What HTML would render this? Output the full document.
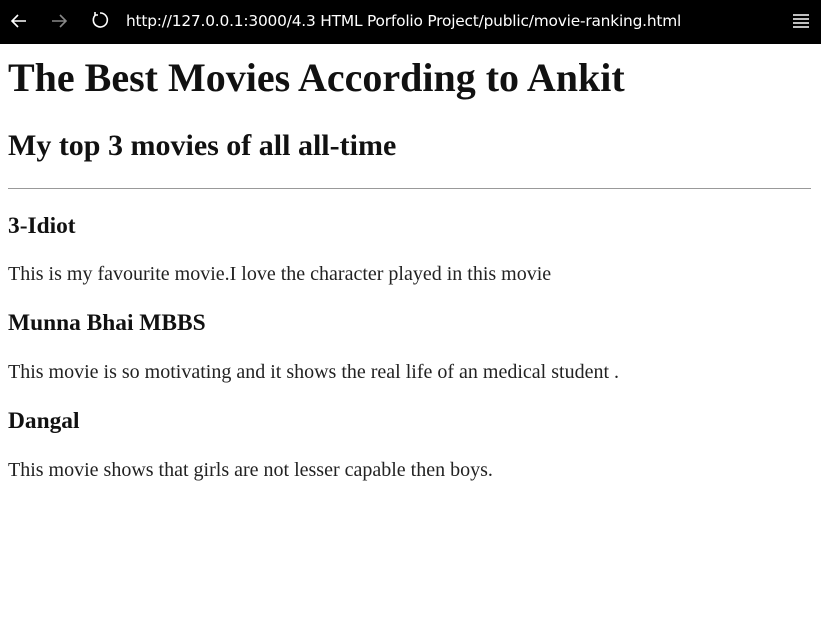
<!DOCTYPE html>
<html><head><meta charset="utf-8"><style>
html,body{margin:0;padding:0;background:#fff;}
.bar{height:44px;background:#000;color:#fff;position:relative;font-family:"DejaVu Sans","Liberation Sans",sans-serif;}
.bar svg{position:absolute;}
.url{position:absolute;left:126px;top:12px;font-size:15.4px;color:#fff;white-space:nowrap;letter-spacing:-0.2px;}
.page{margin:0 10px 0 8px;font-family:"Liberation Serif",serif;color:#111;line-height:1.15;}
h1{font-size:40px;margin:0;padding-top:11px;}
h2{font-size:30px;margin:28px 0 0;}
h3{font-size:23.4px;margin:24px 0 0;}
p{font-size:20px;margin:24px 0 0;color:#222;}
hr{border:0;border-top:1px solid #999;margin:24px 0 0;}
</style></head><body>
<div class="bar">
<svg style="left:9px;top:11px" width="20" height="20" viewBox="0 0 20 20"><path d="M17 10H3M9 4L3 10l6 6" stroke="#fff" stroke-width="1.6" fill="none"/></svg>
<svg style="left:49px;top:11px" width="20" height="20" viewBox="0 0 20 20"><path d="M3 10h14M11 4l6 6-6 6" stroke="#888" stroke-width="1.6" fill="none"/></svg>
<svg style="left:90px;top:10px" width="20" height="20" viewBox="0 0 20 20"><path d="M6 4.5A7 7 0 1 0 10 3M5 2v3h3" stroke="#fff" stroke-width="1.6" fill="none"/></svg>
<div class="url">http://127.0.0.1:3000/4.3 HTML Porfolio Project/public/movie-ranking.html</div>
<svg style="left:793px;top:13px" width="16" height="16" viewBox="0 0 16 16"><path d="M0 2h16M0 6h16M0 10h16M0 14h16" stroke="#fff" stroke-width="1.5"/></svg>
</div>
<div class="page">
<h1>The Best Movies According to Ankit</h1>
<h2>My top 3 movies of all all-time</h2>
<hr>
<h3>3-Idiot</h3>
<p>This is my favourite movie.I love the character played in this movie</p>
<h3>Munna Bhai MBBS</h3>
<p>This movie is so motivating and it shows the real life of an medical student .</p>
<h3>Dangal</h3>
<p>This movie shows that girls are not lesser capable then boys.</p>
</div>
</body></html>
